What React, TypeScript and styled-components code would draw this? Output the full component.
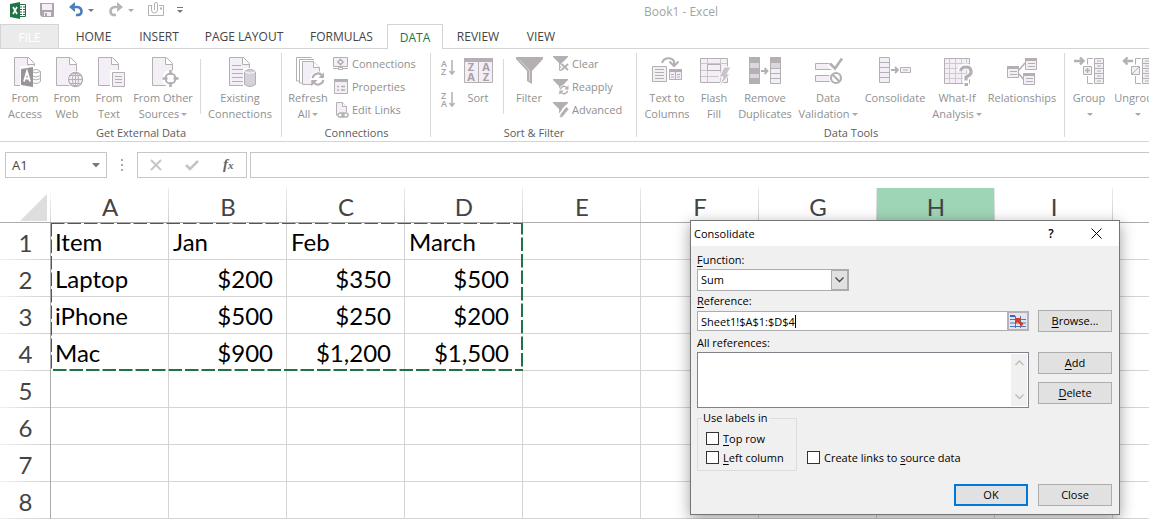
import React from "react";
import styled, { createGlobalStyle, css } from "styled-components";

const UI = `"Open Sans", "Noto Sans", sans-serif`;
const SHEET = `Lato, "Open Sans", sans-serif`;
const LINE = "#b3afb3";
const FILL = "#f4eff6";
const GREEN = "#217346";

const GlobalStyle = createGlobalStyle`
  *, *::before, *::after { box-sizing: border-box; }
  html, body, #root { height: 100%; }
  body { margin: 0; background: #fff; font-family: ${UI}; font-size: 12px; overflow: hidden; }
  button, input, select { font: inherit; color: inherit; margin: 0; padding: 0; border: 0; border-radius: 0; background: none; }
`;

const Page = styled.div`
  position: relative;
  min-height: 100%;
  overflow: hidden;
  background: #fff;
`;

/* ---------- title bar ---------- */

const TitleBar = styled.header`
  display: flex;
  align-items: flex-start;
  height: 24px;
`;
const QuickAccess = styled.div`
  display: flex;
  width: 190px;
  padding: 2px 0 0 10px;
`;
const QuickButton = styled.button<{ $w: number }>`
  display: flex;
  width: ${(p) => p.$w}px;
  height: 18px;
  flex: none;
`;
const WindowTitle = styled.div`
  margin-left: 454px;
  line-height: 24px;
  color: #a3a3a3;
  white-space: nowrap;
`;

/* ---------- tabs ---------- */

const Tabs = styled.nav`
  display: flex;
  height: 25px;
  border-bottom: 1px solid #d4d4d4;
`;
const Tab = styled.button<{ $w: number; $kind?: "file" | "active" }>`
  flex: none;
  width: ${(p) => p.$w}px;
  height: 24px;
  padding-top: 2px;
  line-height: 20px;
  text-align: center;
  color: #444;
  white-space: nowrap;
  ${(p) =>
    p.$kind === "file" &&
    css`
      margin-right: 2px;
      color: #fff;
      background: #ebebeb;
      border: 1px solid #d4d4d4;
      border-bottom: 0;
    `}
  ${(p) =>
    p.$kind === "active" &&
    css`
      height: 25px;
      color: ${GREEN};
      background: #fff;
      border: 1px solid #d4d4d4;
      border-bottom: 0;
    `}
`;

/* ---------- ribbon ---------- */

const Ribbon = styled.div`
  display: flex;
  height: 93px;
  border-bottom: 1px solid #d4d4d4;
  overflow: hidden;
`;
const Group = styled.section<{ $w: number; $pad: number }>`
  display: flex;
  flex-direction: column;
  justify-content: space-between;
  flex: none;
  width: ${(p) => p.$w}px;
  padding-left: ${(p) => p.$pad}px;
  background: linear-gradient(#dadada, #dadada) right 0 top 4px / 1px 84px no-repeat;
`;
const Tools = styled.div`
  display: flex;
  padding-top: 3px;
`;
const GroupLabel = styled.div<{ $pad: number }>`
  margin-left: -${(p) => p.$pad}px;
  line-height: 16px;
  font-size: 11px;
  text-align: center;
  color: #5c5c5c;
`;
const BigButton = styled.button<{ $w: number }>`
  display: flex;
  flex-direction: column;
  align-items: center;
  flex: none;
  width: ${(p) => p.$w}px;
  padding-top: 4px;
  color: #909090;
  font-size: 11px;
  line-height: 16px;
  text-align: center;
  white-space: pre;
`;
const BigLabel = styled.span`
  margin-top: 2px;
`;
const Separator = styled.span<{ $before: number }>`
  flex: none;
  width: 1px;
  height: 55px;
  margin: 7px 3px 0 ${(p) => p.$before}px;
  background: #dadada;
`;
const Stack = styled.div`
  display: flex;
  flex-direction: column;
`;
const SmallButton = styled.button`
  display: flex;
  align-items: center;
  gap: 3px;
  height: 23px;
  padding-left: 2px;
  color: #909090;
  font-size: 11px;
  white-space: nowrap;
`;
const OrderButton = styled.button`
  display: flex;
  align-items: center;
  justify-content: center;
  width: 30px;
  height: 31px;
  margin-bottom: 1px;
`;

/* ---------- formula bar ---------- */

const FormulaBar = styled.div`
  display: flex;
  padding: 10px 0 10px 5px;
`;
const NameBox = styled.div`
  display: flex;
  align-items: center;
  width: 102px;
  height: 26px;
  border: 1px solid #c6c6c6;
  padding-right: 6px;
  color: #444;
  font-size: 13px;
`;
const NameInput = styled.input`
  flex: 1;
  min-width: 0;
  padding-left: 6px;
  outline: 0;
`;
const Grip = styled.span`
  width: 30px;
  display: flex;
  align-items: center;
  justify-content: center;
`;
const FormulaButtons = styled.div`
  display: flex;
  width: 110px;
  height: 26px;
  border: 1px solid #c6c6c6;
`;
const FormulaButton = styled.button`
  flex: 1;
  display: flex;
  align-items: center;
  justify-content: center;
`;
const FormulaInput = styled.input`
  flex: 1;
  min-width: 0;
  height: 26px;
  margin-left: 3px;
  border: 1px solid #c6c6c6;
  border-right: 0;
  outline: 0;
`;

/* ---------- worksheet ---------- */

const SheetArea = styled.main`
  position: relative;
`;
const Grid = styled.table`
  table-layout: fixed;
  width: max-content;
  border-collapse: separate;
  border-spacing: 0;
  font-family: ${SHEET};
  font-size: 24px;
  line-height: 34px;
  color: #000;
`;
const IndexCol = styled.col`
  width: 51px;
`;
const DataCol = styled.col`
  width: 118px;
`;
const Corner = styled.td`
  width: 51px;
  height: 35px;
  padding: 0;
  border-bottom: 1px solid #ababab;
  background: linear-gradient(#fff, #d4d4d4) right / 1px 100% no-repeat;
`;
const CornerMark = styled.svg`
  display: block;
  margin: 4px 0 0 20px;
`;
const ColumnHead = styled.th<{ $hot?: boolean }>`
  width: 118px;
  height: 35px;
  padding: 4px 0 0;
  line-height: 30px;
  font-weight: 400;
  color: #444;
  border-bottom: 1px solid #ababab;
  background: linear-gradient(#ececec, #cfcfcf) right / 1px 100% no-repeat
    ${(p) => (p.$hot ? "#9fd5b7" : "#fff")};
`;
const RowHead = styled.th`
  width: 51px;
  height: 37px;
  padding: 2px 0 0 1px;
  font-weight: 400;
  color: #444;
  border-right: 1px solid #ababab;
  background: linear-gradient(90deg, #f0f0f0, #cfcfcf) bottom / 100% 1px no-repeat;
`;
const Cell = styled.td<{ $num?: boolean }>`
  width: 118px;
  height: 37px;
  padding: ${(p) => (p.$num ? "2px 13px 0 0" : "2px 0 0 4px")};
  text-align: ${(p) => (p.$num ? "right" : "left")};
  border-right: 1px solid #d4d4d4;
  border-bottom: 1px solid #d4d4d4;
`;
const CopyRange = styled.svg`
  position: absolute;
  left: 50px;
  top: 34px;
`;

/* ---------- dialog ---------- */

const Dialog = styled.form`
  position: absolute;
  left: 690px;
  top: 220px;
  width: 430px;
  border: 1px solid #757575;
  background: #f0f0f0;
  box-shadow: 0 4px 14px rgba(0, 0, 0, 0.38);
  font-size: 11px;
  color: #000;
`;
const DialogTitle = styled.div`
  display: flex;
  align-items: center;
  height: 25px;
  padding: 0 17px 1px 3px;
  background: #fff;
`;
const DialogName = styled.h1`
  flex: 1;
  margin: 0;
  font-size: 11px;
  font-weight: 400;
`;
const TitleButton = styled.button`
  display: flex;
  align-items: center;
  justify-content: center;
  width: 12px;
  height: 20px;
  margin-left: 33px;
  font-size: 12px;
  font-weight: 600;
`;
const DialogBody = styled.div`
  padding: 6px 7px 8px 6px;
`;
const FieldLabel = styled.label<{ $top?: number }>`
  display: block;
  margin-top: ${(p) => p.$top ?? 0}px;
  margin-bottom: 1px;
  line-height: 16px;
`;
const Key = styled.u`
  text-underline-offset: 2px;
`;
const Combo = styled.div`
  display: flex;
  width: 152px;
  height: 22px;
  border: 1px solid #ababb0;
  background: #fff;
`;
const ComboSelect = styled.select`
  flex: 1;
  appearance: none;
  padding: 0 0 2px 3px;
  outline: 0;
`;
const ComboArrow = styled.span`
  display: flex;
  align-items: center;
  justify-content: center;
  width: 17px;
  background: #e1e1e1;
  border: 1px solid #ababb0;
`;
const FieldRow = styled.div`
  display: flex;
  align-items: center;
  gap: 9px;
`;
const RefBox = styled.div`
  display: flex;
  flex: 1;
  align-items: center;
  height: 20px;
  padding-left: 3px;
  border: 1px solid #ababb0;
  background: #fff;
`;
const RefInput = styled.input`
  field-sizing: content;
  max-width: 280px;
  outline: 0;
`;
const Caret = styled.span`
  width: 1px;
  height: 13px;
  background: #000;
`;
const RefPicker = styled.button`
  display: flex;
  align-items: center;
  justify-content: center;
  width: 22px;
  height: 20px;
  margin-left: auto;
  margin-right: -1px;
  border: 2px solid #b4b4b8;
  background: #e6e6ea;
`;
const PushButton = styled.button<{ $default?: boolean }>`
  width: 74px;
  height: 22px;
  line-height: 16px;
  text-align: center;
  background: #e1e1e1;
  border: ${(p) => (p.$default ? "2px solid #0078d7" : "1px solid #adadad")};
`;
const ListRow = styled.div`
  display: flex;
  gap: 9px;
`;
const ListBox = styled.div`
  display: flex;
  flex: 1;
  height: 56px;
  padding: 1px;
  border: 1px solid #82828a;
  background: #fff;
`;
const List = styled.select`
  flex: 1;
  appearance: none;
  overflow: hidden;
  outline: 0;
`;
const ScrollStrip = styled.div`
  display: flex;
  flex-direction: column;
  align-items: center;
  justify-content: space-between;
  width: 16px;
  padding: 6px 0;
  background: #f0f0f0;
`;
const ButtonStack = styled.div`
  display: flex;
  flex-direction: column;
  gap: 8px;
`;
const Options = styled.div`
  display: flex;
  align-items: flex-end;
  gap: 10px;
  margin-top: 2px;
`;
const LabelGroup = styled.fieldset`
  width: 100px;
  margin: 0;
  padding: 3px 8px 3px;
  border: 1px solid #dcdcdc;
`;
const Legend = styled.legend`
  margin-left: -4px;
  padding: 0 1px;
  line-height: 16px;
`;
const Check = styled.label<{ $low?: boolean }>`
  display: flex;
  align-items: center;
  gap: 4px;
  height: 19px;
  margin-bottom: ${(p) => (p.$low ? 4 : 0)}px;
  white-space: nowrap;
`;
const CheckBox = styled.input`
  appearance: none;
  width: 13px;
  height: 13px;
  border: 1px solid #333;
  background: #fff;
`;
const Footer = styled.div`
  display: flex;
  justify-content: flex-end;
  gap: 10px;
  margin-top: 13px;
`;

/* ---------- icons ---------- */

const Svg = ({ w = 32, h = 32, children }: { w?: number; h?: number; children: React.ReactNode }) => (
  <svg width={w} height={h} viewBox={`0 0 ${w} ${h}`} fill="none" stroke={LINE} aria-hidden="true">
    {children}
  </svg>
);

const Drop = ({ color = "#a8a8a8" }: { color?: string }) => (
  <svg width="6" height="3" viewBox="0 0 6 3" fill={color} aria-hidden="true">
    <path d="M0 0h6L3 3z" />
  </svg>
);

const Sheet = () => (
  <>
    <path d="M5.5 1.5H19.500L25.500 7.500V29.500H5.500Z" fill={FILL} />
    <path d="M18.500 1.500V8.500H25.500" fill="#fff" />
  </>
);
const Cylinder = ({ x, y, w, h, fill = "#d6d1d8" }: { x: number; y: number; w: number; h: number; fill?: string }) => (
  <path d={`M${x} ${y + 2}q${w / 2} -4 ${w} 0v${h - 4}q${-w / 2} 4 ${-w} 0z`} fill={fill} />
);

const AccessIcon = () => (
  <Svg>
    <Sheet />
    <path d="M11 10h21v22H11z" fill="#fff" stroke="none" />
    <path d="M19.5 8V9.500M25.500 8v2" />
    <Cylinder x={22.5} y={13.5} w={9} h={14} fill="#fff" />
    <path d="M22.5 15.5q4.5 3 9 0M22.5 19.500q4.5 3 9 0M22.5 22.500q4.5 3 9 0" />
    <path d="M12 13l12-2v20l-12-2z" fill="#989498" stroke="none" />
    <path d="M15 25.500l3-10 3 10M16 22.500h4" stroke="#fff" strokeWidth="1.800" />
  </Svg>
);
const WebIcon = () => (
  <Svg>
    <Sheet />
    <circle cx="24.500" cy="23.500" r="8.500" fill="#fff" stroke="none" />
    <circle cx="24.500" cy="23.500" r="7" fill={FILL} strokeWidth="1.300" />
    <ellipse cx="24.500" cy="23.500" rx="3" ry="7" />
    <path d="M24.500 16.500v14M17.500 23.500h14M18.500 19.500h12M18.500 27.500h12" />
  </Svg>
);
const TextIcon = () => (
  <Svg>
    <Sheet />
    <path d="M17 14h15v18H17z" fill="#fff" stroke="none" />
    <path d="M19.500 16.500h12v14h-12z" fill={FILL} />
    <path d="M22 20.500h7M22 23.500h7M22 26.500h7" />
  </Svg>
);
const SourcesIcon = () => (
  <Svg>
    <Sheet />
    <circle cx="23.500" cy="22.500" r="8.500" fill="#fff" stroke="none" />
    <circle cx="23.500" cy="22.500" r="5" strokeWidth="2" fill="#fff" />
    <path d="M23.500 14v5M23.500 26v5M15.500 22.500h5M26.500 22.500h5" strokeWidth="2.600" />
  </Svg>
);
const ExistingIcon = () => (
  <Svg>
    <Sheet />
    <path d="M8 9.500h9M8 13.500h14M8 17.500h12M8 21.500h12M8 25.500h12" />
    <path d="M19 12h13v20H19z" fill="#fff" stroke="none" />
    <Cylinder x={20.5} y={13.5} w={11} h={17} />
    <path d="M20.500 15.500q5.500 3.500 11 0" stroke="#fff" />
  </Svg>
);
const Cycle = ({ x, y, s = 1 }: { x: number; y: number; s?: number }) => (
  <g transform={`translate(${x} ${y}) scale(${s})`}>
    <circle r="8.500" fill="#fff" stroke="none" />
    <path d="M-6 -1A6 6 0 0 1 4.500 -4M6 1A6 6 0 0 1 -4.500 4" strokeWidth="2.400" />
    <path d="M7.500 -8V-1H.5zM-7.500 8V1H-.5z" fill={LINE} stroke="none" />
  </g>
);
const RefreshIcon = () => (
  <Svg>
    <path d="M7 25H4.500V1.500H19.500M11 27H7.500V3.500H22" />
    <path d="M10.500 28.500V5.500H21.500L27.500 11.500V28.500Z" fill={FILL} />
    <path d="M21.500 5.500V11.500H27.500" fill="#fff" />
    <Cycle x={26} y={23} s={0.9} />
  </Svg>
);
const ConnectionsIcon = () => (
  <Svg w={16} h={16}>
    <path d="M.5 1.500h14v9H.5z" fill={FILL} />
    <path d="M7.500 3.500l2.500 2.500-2.500 2.500L5 6z" strokeWidth="1.600" fill="#fff" />
    <path d="M0 12.500h5M10 12.500h5M5.500 11.500h4v2h-4z" />
  </Svg>
);
const PropertiesIcon = () => (
  <Svg w={16} h={16}>
    <path d="M1.500 .5h13v14h-13z" fill={FILL} />
    <path d="M1 0h14v3H1z" fill={LINE} stroke="none" />
    <path d="M4 7.500h2M4 11h2M8 7.500h4M8 11h4" strokeWidth="1.500" />
  </Svg>
);
const LinksIcon = () => (
  <Svg w={16} h={16}>
    <path d="M3.500 13.500V.5h6l4 4v6" fill={FILL} />
    <path d="M9.500 .5v4h4" fill="#fff" />
    <path d="M4 10h12v6H4z" fill="#fff" stroke="none" />
    <rect x="5" y="11" width="6" height="4" rx="2" strokeWidth="1.500" />
    <rect x="9" y="11" width="6" height="4" rx="2" strokeWidth="1.500" />
  </Svg>
);
const OrderIcon = ({ top, bottom }: { top: string; bottom: string }) => (
  <svg width="14" height="18" viewBox="0 0 14 18" overflow="visible" aria-hidden="true">
    <g fill="#a5a1a5" fontFamily="Open Sans" fontSize="9" fontWeight="600">
      <text x="0" y="8">{top}</text>
      <text x="0" y="16">{bottom}</text>
    </g>
    <path d="M11 1v14M8.500 12l2.500 3 2.500-3" fill="none" stroke={LINE} strokeWidth="1.500" />
  </svg>
);
const SortIcon = () => (
  <svg width="32" height="32" viewBox="0 0 32 32" aria-hidden="true">
    <path d="M2.500 3.500h28v23h-28zM16.500 4v22" fill={FILL} stroke={LINE} />
    <path d="M2 2h29v4H2z" fill={LINE} />
    <g fill="#a5a1a5" fontFamily="Open Sans" fontSize="11" fontWeight="700" textAnchor="middle">
      <text x="9" y="15">Z</text>
      <text x="9" y="25">A</text>
      <text x="24" y="15">A</text>
      <text x="24" y="25">Z</text>
    </g>
  </svg>
);
const FilterIcon = () => (
  <Svg>
    <path d="M3 1h27v2L19 15v13l-5-3V15L3 3z" fill={LINE} stroke="none" />
    <path d="M6 3.500l10.500 11V25" stroke="#d8d4d8" />
  </Svg>
);
const SmallFunnel = () => <path d="M0 0h15v1L9 7v8H7l-1-1V7L0 1z" fill={LINE} stroke="none" />;
const ClearIcon = () => (
  <Svg w={16} h={16}>
    <SmallFunnel />
    <path d="M8 8l7 6M15 8l-7 6" stroke="#fff" strokeWidth="4" />
    <path d="M8.500 8l6.500 6M15 8l-6.500 6" strokeWidth="1.800" />
  </Svg>
);
const ReapplyIcon = () => (
  <Svg w={16} h={16}>
    <SmallFunnel />
    <Cycle x={11} y={11} s={0.6} />
  </Svg>
);
const AdvancedIcon = () => (
  <Svg w={16} h={16}>
    <SmallFunnel />
    <path d="M7 15l8-10" stroke="#fff" strokeWidth="6" />
    <path d="M8.500 13.500l6-7.500" strokeWidth="3" />
    <path d="M7 15.500l.5-3 2.500 2z" fill={LINE} stroke="none" />
  </Svg>
);
const ColumnsIcon = () => (
  <Svg>
    <path d="M1.500 10.500h14v15h-14z" fill={FILL} />
    <path d="M4 13.500h9M4 16.500h9M4 19.500h9M4 22.500h9" />
    <path d="M18.500 13.500h12v10h-12zM24.500 14v9M20 18.500h3M26 18.500h3M20 21h3M26 21h3" fill={FILL} />
    <path d="M18 13h13v3H18z" fill={LINE} stroke="none" />
    <path d="M11 7C13 1 20 1 23 5V9" strokeWidth="2" />
    <path d="M18.500 5.500L23 10l4.500-4.500" strokeWidth="2" />
  </Svg>
);
const FlashIcon = () => (
  <Svg>
    <path d="M2.500 2.500h27v24h-27z" fill={FILL} />
    <path d="M3 7.500h26M3 14.500h26M3 20.500h26M9.500 3v23M22.500 3v23" stroke="#cbc6cb" />
    <path d="M9.500 8.500h13v6h-13z" fill={FILL} />
    <path d="M26 11h7l-4 7h3L21 31l4-10h-4z" fill="#c9c4c9" stroke="#fff" />
  </Svg>
);
const RemoveIcon = () => (
  <Svg>
    <path d="M0 1h11v27H0z" fill={LINE} stroke="none" />
    <path d="M1 7h9v5H1zM1 18h9v4H1z" fill="#dcd7dd" stroke="none" />
    <path d="M21.500 1.500h10v26h-10z" fill={FILL} />
    <path d="M21 1h11v6H21z" fill={LINE} stroke="none" />
    <path d="M22 7h9v5h-9z" fill="#dcd7dd" stroke="none" />
    <path d="M21.500 12.500h10M21.500 17.500h10M21.500 22.500h10" />
    <path d="M12 15h6M15.500 12l3 3-3 3" strokeWidth="1.800" />
  </Svg>
);
const ValidationIcon = () => (
  <Svg>
    <path d="M3.500 7.500h16v6h-16zM3.500 19.500h16v6h-16z" fill={FILL} />
    <path d="M17 8l5 5 8-10" stroke="#fff" strokeWidth="5" />
    <path d="M18 7.500l5 5 7-10" strokeWidth="2.600" />
    <circle cx="24" cy="22" r="7" fill="#fff" stroke="none" />
    <circle cx="24" cy="22" r="5" strokeWidth="2.200" />
    <path d="M20.500 18.500l7 7" strokeWidth="2.200" />
  </Svg>
);
const ConsolidateIcon = () => (
  <Svg>
    <path d="M.5 1.500h10v25H.5zM.5 6.500h10M.5 11.500h10M.5 16.500h10M.5 21.500h10" fill={FILL} />
    <path d="M12 14h7M16 11l3 3-3 3" strokeWidth="1.800" />
    <path d="M21.500 11.500h10v5h-10z" fill={FILL} />
    <path d="M24 14h5" />
  </Svg>
);
const WhatIfIcon = () => (
  <Svg>
    <path d="M3.500 2.500h25v25h-25z" fill={FILL} />
    <path d="M4 7.500h24M4 12.500h24M4 17.500h24M4 22.500h24M8.500 3v24M14.500 3v24M20.500 3v24M25.500 3v24" stroke="#cfcacf" />
    <path d="M19 15q1-5 6-4.500t5 5-5 6V30" stroke="#fff" strokeWidth="6" />
    <path d="M19.500 15q1-4 5.500-4t5 4-5 6v3.500" strokeWidth="3.200" />
    <path d="M23.500 27h3.500v3h-3.500z" fill={LINE} stroke="none" />
  </Svg>
);
const RelationIcon = () => (
  <Svg>
    <path d="M13 14l6-7M13 18l5 6" strokeWidth="1.500" />
    <path d="M1.500 10.500h11v11h-11zM19.500 2.500h11v11h-11zM17.500 17.500h11v11h-11z" fill={FILL} />
    <path d="M1 10h12v3H1zM19 2h12v3H19zM17 17h12v3H17z" fill={LINE} stroke="none" />
    <path d="M4 15.500h7M4 18.500h7M22 7.500h7M22 10.500h7M20 22.500h7M20 25.500h7" />
  </Svg>
);
const OutlineIcon = ({ undo }: { undo?: boolean }) => (
  <Svg>
    <path d="M20 2.500h-5.500v6M14.500 20v7.500H20" />
    <path d="M21.500 2.500h9v25h-9zM21.500 7.500h9M21.500 12.500h9M21.500 17.500h9M21.500 22.500h9" fill={FILL} />
    <path d="M24 5h4M24 10h4M24 15h4M24 20h4M24 25h4" />
    <path d="M10.500 10.500h8v8h-8z" fill={FILL} />
    {undo ? <path d="M11 18l7-7" /> : <path d="M12 14.500h5M14.500 12v5" strokeWidth="1.500" />}
    {undo ? (
      <path d="M12 5H3M6.500 1.500L3 5l3.500 3.500" strokeWidth="2.400" />
    ) : (
      <path d="M1 5h9M7 1.500L10.500 5 7 8.500" strokeWidth="2.400" />
    )}
  </Svg>
);

const ExcelIcon = () => (
  <svg width="17" height="17" viewBox="0 0 17 17" aria-hidden="true">
    <path d="M8.500 2.500h7v12h-7z" fill="#fff" stroke={GREEN} />
    <path d="M10 5h2M13 5h2M10 7.500h2M13 7.500h2M10 10h2M13 10h2M10 12.500h2M13 12.500h2" stroke={GREEN} />
    <path d="M0 2l10-2v17L0 15z" fill={GREEN} />
    <path d="M3 5l4 7M7 5l-4 7" stroke="#fff" strokeWidth="1.600" />
  </svg>
);
const SaveIcon = () => (
  <svg width="15" height="16" viewBox="0 0 15 16" aria-hidden="true">
    <path d="M0 1h14v14H2l-2-2z" fill="#aaa6aa" />
    <path d="M2 2h10v6H2zM4 10h7v4H4z" fill={FILL} />
    <path d="M5 11h2v3H5z" fill="#aaa6aa" />
  </svg>
);
const CurveIcon = ({ color, flip }: { color: string; flip?: boolean }) => (
  <svg width="16" height="16" viewBox="0 0 16 16" fill="none" stroke={color} aria-hidden="true">
    <g transform={flip ? "translate(16 0) scale(-1 1)" : undefined}>
      <path d="M4 5h5q4.500 .5 4.500 4.500T8 13" strokeWidth="2.600" />
      <path d="M7 0v3L5.500 5 7 7v3L1 5z" fill={color} stroke="none" />
    </g>
  </svg>
);
const ClipIcon = () => (
  <Svg w={17} h={16}>
    <path d="M3 3.500H.5v10h15v-10H11" />
    <path d="M3.500 3v5q0 3 3 3t3-3V2q0-1.500-1.500-1.500T6.500 2v6" />
    <path d="M12 6.500h2" strokeWidth="2" />
  </Svg>
);
const MoreIcon = () => (
  <svg width="6" height="8" viewBox="0 0 6 8" aria-hidden="true">
    <path d="M0 1.500h6" stroke="#777" />
    <path d="M0 4h6L3 7z" fill="#777" />
  </svg>
);
const Chevron = ({ up, color = "#444" }: { up?: boolean; color?: string }) => (
  <svg width="9" height="6" viewBox="0 0 9 6" fill="none" stroke={color} strokeWidth="1.300" aria-hidden="true">
    <path d={up ? "M.5 5l4-4 4 4" : "M.5 .5l4 4 4-4"} />
  </svg>
);
const PickerIcon = () => (
  <svg width="16" height="13" viewBox="0 0 16 13" aria-hidden="true">
    <path d="M0 0h16v13H0z" fill="#dfe6f5" />
    <path d="M0 1h5M0 4.500h16M0 8h16M0 11.500h16M5.500 1v12M10.500 1v12" stroke="#5474b4" />
    <path d="M0 0h5v2H0z" fill="#3a64c8" />
    <path d="M5 3h6L9.500 5l4 4-2 2-4-4L5 9z" fill="#d93a1c" />
  </svg>
);

/* ---------- data ---------- */

const columns = ["A", "B", "C", "D", "E", "F", "G", "H", "I", "J"];
const rows: string[][] = [
  ["Item", "Jan", "Feb", "March"],
  ["Laptop", "$200", "$350", "$500"],
  ["iPhone", "$500", "$250", "$200"],
  ["Mac", "$900", "$1,200", "$1,500"],
  [],
  [],
  [],
  [],
];

type BigProps = { w: number; icon: React.ReactNode; label: string; menu?: boolean };
const DropWrap = styled.span`
  display: inline-flex;
  align-items: center;
  height: 16px;
  margin-left: 2px;
  vertical-align: top;
`;
const Big = ({ w, icon, label, menu }: BigProps) => (
  <BigButton type="button" $w={w}>
    {icon}
    <BigLabel>
      {label}
      {menu && (
        <DropWrap>
          <Drop />
        </DropWrap>
      )}
    </BigLabel>
  </BigButton>
);

export default function App() {
  return (
    <Page>
      <GlobalStyle />
      <TitleBar>
        <QuickAccess>
          <QuickButton $w={30} aria-label="Excel"><ExcelIcon /></QuickButton>
          <QuickButton $w={28} aria-label="Save"><SaveIcon /></QuickButton>
          <QuickButton $w={18} aria-label="Undo"><CurveIcon color="#4a7ebb" /></QuickButton>
          <QuickButton $w={22} aria-label="Undo list"><DropWrap><Drop color="#777" /></DropWrap></QuickButton>
          <QuickButton $w={18} aria-label="Redo"><CurveIcon color="#b5b5b5" flip /></QuickButton>
          <QuickButton $w={22} aria-label="Redo list"><DropWrap><Drop /></DropWrap></QuickButton>
          <QuickButton $w={27} aria-label="Attach"><ClipIcon /></QuickButton>
          <QuickButton $w={10} aria-label="Customize"><DropWrap><MoreIcon /></DropWrap></QuickButton>
        </QuickAccess>
        <WindowTitle>Book1 - Excel</WindowTitle>
      </TitleBar>

      <Tabs>
        <Tab $w={59} $kind="file">FILE</Tab>
        <Tab $w={65}>HOME</Tab>
        <Tab $w={66}>INSERT</Tab>
        <Tab $w={104}>PAGE LAYOUT</Tab>
        <Tab $w={91}>FORMULAS</Tab>
        <Tab $w={56} $kind="active">DATA</Tab>
        <Tab $w={70}>REVIEW</Tab>
        <Tab $w={56}>VIEW</Tab>
      </Tabs>

      <Ribbon>
        <Group $w={282} $pad={4}>
          <Tools>
            <Big w={42} icon={<AccessIcon />} label={"From\nAccess"} />
            <Big w={42} icon={<WebIcon />} label={"From\nWeb"} />
            <Big w={42} icon={<TextIcon />} label={"From\nText"} />
            <Big w={66} icon={<SourcesIcon />} label={"From Other\nSources"} menu />
            <Separator $before={4} />
            <Big w={72} icon={<ExistingIcon />} label={"Existing\nConnections"} />
          </Tools>
          <GroupLabel $pad={4}>Get External Data</GroupLabel>
        </Group>

        <Group $w={149} $pad={3}>
          <Tools>
            <Big w={46} icon={<RefreshIcon />} label={"Refresh\nAll"} menu />
            <Stack>
              <SmallButton><ConnectionsIcon />Connections</SmallButton>
              <SmallButton><PropertiesIcon />Properties</SmallButton>
              <SmallButton><LinksIcon />Edit Links</SmallButton>
            </Stack>
          </Tools>
          <GroupLabel $pad={3}>Connections</GroupLabel>
        </Group>

        <Group $w={206} $pad={2}>
          <Tools>
            <Stack>
              <OrderButton aria-label="Sort ascending"><OrderIcon top="A" bottom="Z" /></OrderButton>
              <OrderButton aria-label="Sort descending"><OrderIcon top="Z" bottom="A" /></OrderButton>
            </Stack>
            <Big w={30} icon={<SortIcon />} label="Sort" />
            <Separator $before={10} />
            <Big w={44} icon={<FilterIcon />} label="Filter" />
            <Stack>
              <SmallButton><ClearIcon />Clear</SmallButton>
              <SmallButton><ReapplyIcon />Reapply</SmallButton>
              <SmallButton><AdvancedIcon />Advanced</SmallButton>
            </Stack>
          </Tools>
          <GroupLabel $pad={2}>Sort &amp; Filter</GroupLabel>
        </Group>

        <Group $w={428} $pad={5}>
          <Tools>
            <Big w={50} icon={<ColumnsIcon />} label={"Text to\nColumns"} />
            <Big w={44} icon={<FlashIcon />} label={"Flash\nFill"} />
            <Big w={58} icon={<RemoveIcon />} label={"Remove\nDuplicates"} />
            <Big w={68} icon={<ValidationIcon />} label={"Data\nValidation"} menu />
            <Big w={66} icon={<ConsolidateIcon />} label="Consolidate" />
            <Big w={58} icon={<WhatIfIcon />} label={"What-If\nAnalysis"} menu />
            <Big w={72} icon={<RelationIcon />} label="Relationships" />
          </Tools>
          <GroupLabel $pad={5}>Data Tools</GroupLabel>
        </Group>

        <Group $w={240} $pad={2}>
          <Tools>
            <Big w={44} icon={<OutlineIcon />} label={"Group\n"} menu />
            <Big w={52} icon={<OutlineIcon undo />} label={"Ungroup\n"} menu />
          </Tools>
        </Group>
      </Ribbon>

      <FormulaBar>
        <NameBox>
          <NameInput aria-label="Name box" defaultValue="A1" />
          <svg width="8" height="5" viewBox="0 0 8 5" fill="#777" aria-hidden="true"><path d="M0 0h8L4 4.500z" /></svg>
        </NameBox>
        <Grip>
          <svg width="2" height="12" viewBox="0 0 2 12" fill="#aaa" aria-hidden="true">
            <path d="M0 0h2v2H0zM0 5h2v2H0zM0 10h2v2H0z" />
          </svg>
        </Grip>
        <FormulaButtons>
          <FormulaButton aria-label="Cancel">
            <svg width="12" height="12" viewBox="0 0 12 12" stroke="#c4c4c4" strokeWidth="1.800" aria-hidden="true"><path d="M1 1l10 10M11 1L1 11" /></svg>
          </FormulaButton>
          <FormulaButton aria-label="Enter">
            <svg width="14" height="12" viewBox="0 0 14 12" fill="none" stroke="#c4c4c4" strokeWidth="2.600" aria-hidden="true"><path d="M1 6l4 4 8-8" /></svg>
          </FormulaButton>
          <FormulaButton aria-label="Insert function">
            <svg width="14" height="16" viewBox="0 0 14 16" fill="#666" fontFamily="Liberation Serif" fontStyle="italic" fontWeight="700" aria-hidden="true">
              <text x="2" y="12" fontSize="15">f</text>
              <text x="7" y="12" fontSize="11">x</text>
            </svg>
          </FormulaButton>
        </FormulaButtons>
        <FormulaInput aria-label="Formula bar" />
      </FormulaBar>

      <SheetArea>
        <Grid>
          <colgroup>
            <IndexCol />
            {columns.map((c) => <DataCol key={c} />)}
          </colgroup>
          <thead>
            <tr>
              <Corner>
                <CornerMark width="27" height="27" viewBox="0 0 27 27" fill="#dedede" aria-hidden="true"><path d="M27 0v27H0z" /></CornerMark>
              </Corner>
              {columns.map((c) => (
                <ColumnHead key={c} scope="col" $hot={c === "H"}>{c}</ColumnHead>
              ))}
            </tr>
          </thead>
          <tbody>
            {rows.map((row, r) => (
              <tr key={r}>
                <RowHead scope="row">{r + 1}</RowHead>
                {columns.map((c, i) => (
                  <Cell key={c} $num={(row[i] ?? "").startsWith("$")}>{row[i]}</Cell>
                ))}
              </tr>
            ))}
          </tbody>
        </Grid>
        <CopyRange width="474" height="150" viewBox="0 0 474 150" fill="none" stroke={GREEN} aria-hidden="true">
          <path d="M1 1.500h472M1.500 1v148" stroke="#fff" />
          <path d="M1 148h472M472 1v148" stroke="#fff" strokeWidth="2" />
          <path d="M1 1.500h472M1.500 1v148" strokeDasharray="13.500 3" />
          <path d="M3 148h470" strokeWidth="2" strokeDasharray="13.500 3" />
          <path d="M472 1v148" strokeWidth="2" strokeDasharray="13.500 3" strokeDashoffset="2" />
        </CopyRange>
      </SheetArea>

      <Dialog aria-label="Consolidate" onSubmit={(e) => e.preventDefault()}>
        <DialogTitle>
          <DialogName>Consolidate</DialogName>
          <TitleButton type="button">?</TitleButton>
          <TitleButton type="button" aria-label="Close dialog">
            <svg width="11" height="11" viewBox="0 0 11 11" stroke="#000" aria-hidden="true"><path d="M.5 .5l10 10M10.500 .5l-10 10" /></svg>
          </TitleButton>
        </DialogTitle>
        <DialogBody>
          <FieldLabel htmlFor="fn"><Key>F</Key>unction:</FieldLabel>
          <Combo>
            <ComboSelect id="fn" defaultValue="Sum"><option>Sum</option></ComboSelect>
            <ComboArrow><Chevron /></ComboArrow>
          </Combo>

          <FieldLabel htmlFor="ref" $top={2}><Key>R</Key>eference:</FieldLabel>
          <FieldRow>
            <RefBox>
              <RefInput id="ref" defaultValue="Sheet1!$A$1:$D$4" />
              <Caret />
              <RefPicker type="button" aria-label="Collapse dialog"><PickerIcon /></RefPicker>
            </RefBox>
            <PushButton type="button"><Key>B</Key>rowse...</PushButton>
          </FieldRow>

          <FieldLabel htmlFor="all" $top={3}>All references:</FieldLabel>
          <ListRow>
            <ListBox>
              <List id="all" multiple />
              <ScrollStrip>
                <Chevron up color="#bbb" />
                <Chevron color="#bbb" />
              </ScrollStrip>
            </ListBox>
            <ButtonStack>
              <PushButton type="button"><Key>A</Key>dd</PushButton>
              <PushButton type="button"><Key>D</Key>elete</PushButton>
            </ButtonStack>
          </ListRow>

          <Options>
            <LabelGroup>
              <Legend>Use labels in</Legend>
              <Check><CheckBox type="checkbox" /><span><Key>T</Key>op row</span></Check>
              <Check><CheckBox type="checkbox" /><span><Key>L</Key>eft column</span></Check>
            </LabelGroup>
            <Check $low><CheckBox type="checkbox" /><span>Create links to <Key>s</Key>ource data</span></Check>
          </Options>

          <Footer>
            <PushButton type="submit" $default>OK</PushButton>
            <PushButton type="button">Close</PushButton>
          </Footer>
        </DialogBody>
      </Dialog>
    </Page>
  );
}
